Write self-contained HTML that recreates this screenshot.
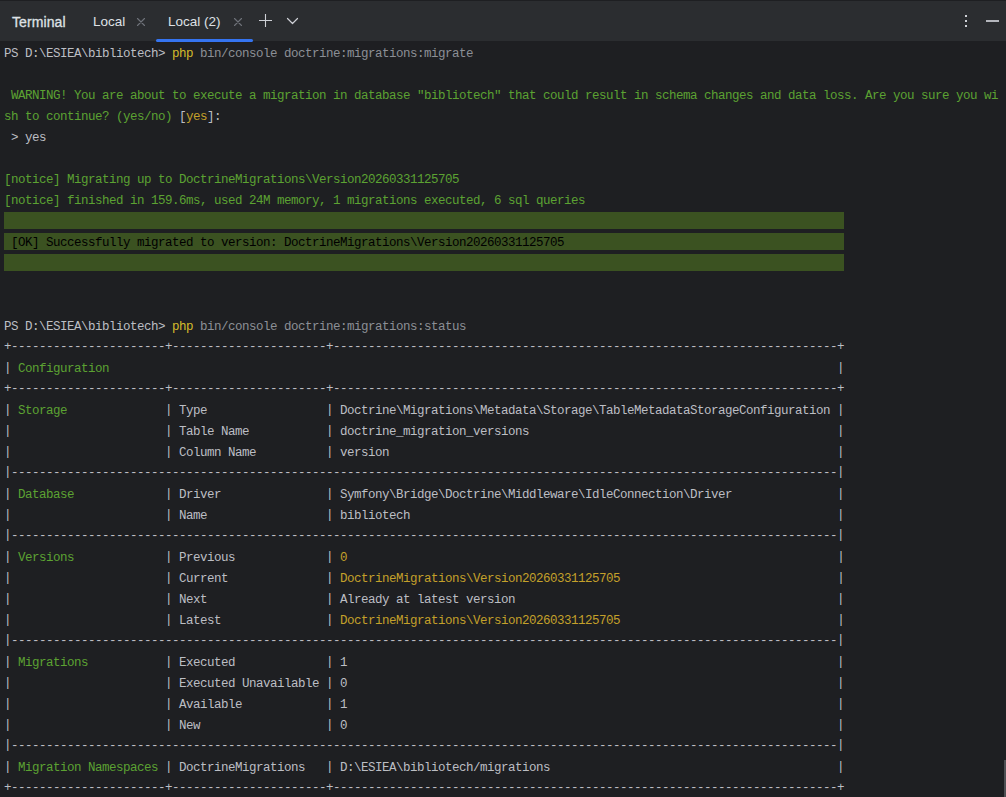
<!DOCTYPE html>
<html><head><meta charset="utf-8"><style>
html,body{margin:0;padding:0;}
body{width:1006px;height:797px;overflow:hidden;background:#1e1f22;position:relative;font-family:"Liberation Sans",sans-serif;}
#hdr{position:absolute;left:0;top:0;width:1006px;height:41px;background:#2b2d30;}
#strip{position:absolute;left:0;top:0;width:1006px;height:1px;background:#1e1f22;}
.tab{position:absolute;top:13px;font-size:13.5px;color:#dfe1e5;line-height:18px;white-space:nowrap;}
.x{position:absolute;}
#term{position:absolute;left:0;top:0;width:1006px;height:797px;}
.ln{position:absolute;left:4px;height:21px;line-height:21px;font-family:"Liberation Mono",monospace;font-size:12.5px;letter-spacing:-0.5012px;color:#bcbec4;white-space:pre;}
.ok{color:#000;}
.p{position:relative;top:-1px;}
.d{position:relative;top:-1px;}
.gb{position:absolute;left:4px;width:840px;height:17px;background:#3b5221;}
#sb{position:absolute;left:1004px;top:760px;width:2px;height:37px;background:#4e5054;}
</style></head><body>
<div id="term">
<div class="gb" style="top:212px"></div>
<div class="gb" style="top:233px"></div>
<div class="gb" style="top:254px"></div>
<div class="ln ok" style="top:233px"> [OK] Successfully migrated to version: DoctrineMigrations\Version20260331125705</div>
<div class="ln" style="top:44px">PS D:\ESIEA\bibliotech&gt; <span style="color:#d4bc2c">php</span><span style="color:#8c8f96"> bin/console doctrine:migrations:migrate</span></div>
<div class="ln" style="top:86px"><span style="color:#5ca232"> WARNING! You are about to execute a migration in database &quot;bibliotech&quot; that could result in schema changes and data loss. Are you sure you wi</span></div>
<div class="ln" style="top:107px"><span style="color:#5ca232">sh to continue? (yes/no) </span><span style="color:#bcbec4">[</span><span style="color:#c4a02a">yes</span><span style="color:#bcbec4">]</span><span style="color:#bcbec4">:</span></div>
<div class="ln" style="top:128px"> &gt; yes</div>
<div class="ln" style="top:170px"><span style="color:#5ca232">[notice] Migrating up to DoctrineMigrations\Version20260331125705</span></div>
<div class="ln" style="top:191px"><span style="color:#5ca232">[notice] finished in 159.6ms, used 24M memory, 1 migrations executed, 6 sql queries</span></div>
<div class="ln" style="top:317px">PS D:\ESIEA\bibliotech&gt; <span style="color:#d4bc2c">php</span><span style="color:#8c8f96"> bin/console doctrine:migrations:status</span></div>
<div class="ln" style="top:338px"><span class="d">+----------------------+----------------------+------------------------------------------------------------------------+</span></div>
<div class="ln" style="top:359px"><span class="p">|</span> <span style="color:#5ca232">Configuration                                                                                                        </span><span class="p">|</span></div>
<div class="ln" style="top:380px"><span class="d">+----------------------+----------------------+------------------------------------------------------------------------+</span></div>
<div class="ln" style="top:401px"><span class="p">|</span> <span style="color:#5ca232">Storage              </span><span class="p">|</span> Type                 <span class="p">|</span> Doctrine\Migrations\Metadata\Storage\TableMetadataStorageConfiguration <span class="p">|</span></div>
<div class="ln" style="top:422px"><span class="p">|</span> <span style="color:#5ca232">                     </span><span class="p">|</span> Table Name           <span class="p">|</span> doctrine_migration_versions                                            <span class="p">|</span></div>
<div class="ln" style="top:443px"><span class="p">|</span> <span style="color:#5ca232">                     </span><span class="p">|</span> Column Name          <span class="p">|</span> version                                                                <span class="p">|</span></div>
<div class="ln" style="top:464px"><span class="d"><span class="p">|</span>----------------------------------------------------------------------------------------------------------------------<span class="p">|</span></span></div>
<div class="ln" style="top:485px"><span class="p">|</span> <span style="color:#5ca232">Database             </span><span class="p">|</span> Driver               <span class="p">|</span> Symfony\Bridge\Doctrine\Middleware\IdleConnection\Driver               <span class="p">|</span></div>
<div class="ln" style="top:506px"><span class="p">|</span> <span style="color:#5ca232">                     </span><span class="p">|</span> Name                 <span class="p">|</span> bibliotech                                                             <span class="p">|</span></div>
<div class="ln" style="top:527px"><span class="d"><span class="p">|</span>----------------------------------------------------------------------------------------------------------------------<span class="p">|</span></span></div>
<div class="ln" style="top:548px"><span class="p">|</span> <span style="color:#5ca232">Versions             </span><span class="p">|</span> Previous             <span class="p">|</span> <span style="color:#c4a02a">0                                                                      </span><span class="p">|</span></div>
<div class="ln" style="top:569px"><span class="p">|</span> <span style="color:#5ca232">                     </span><span class="p">|</span> Current              <span class="p">|</span> <span style="color:#c4a02a">DoctrineMigrations\Version20260331125705                               </span><span class="p">|</span></div>
<div class="ln" style="top:590px"><span class="p">|</span> <span style="color:#5ca232">                     </span><span class="p">|</span> Next                 <span class="p">|</span> Already at latest version                                              <span class="p">|</span></div>
<div class="ln" style="top:611px"><span class="p">|</span> <span style="color:#5ca232">                     </span><span class="p">|</span> Latest               <span class="p">|</span> <span style="color:#c4a02a">DoctrineMigrations\Version20260331125705                               </span><span class="p">|</span></div>
<div class="ln" style="top:632px"><span class="d"><span class="p">|</span>----------------------------------------------------------------------------------------------------------------------<span class="p">|</span></span></div>
<div class="ln" style="top:653px"><span class="p">|</span> <span style="color:#5ca232">Migrations           </span><span class="p">|</span> Executed             <span class="p">|</span> 1                                                                      <span class="p">|</span></div>
<div class="ln" style="top:674px"><span class="p">|</span> <span style="color:#5ca232">                     </span><span class="p">|</span> Executed Unavailable <span class="p">|</span> 0                                                                      <span class="p">|</span></div>
<div class="ln" style="top:695px"><span class="p">|</span> <span style="color:#5ca232">                     </span><span class="p">|</span> Available            <span class="p">|</span> 1                                                                      <span class="p">|</span></div>
<div class="ln" style="top:716px"><span class="p">|</span> <span style="color:#5ca232">                     </span><span class="p">|</span> New                  <span class="p">|</span> 0                                                                      <span class="p">|</span></div>
<div class="ln" style="top:737px"><span class="d"><span class="p">|</span>----------------------------------------------------------------------------------------------------------------------<span class="p">|</span></span></div>
<div class="ln" style="top:758px"><span class="p">|</span> <span style="color:#5ca232">Migration Namespaces </span><span class="p">|</span> DoctrineMigrations   <span class="p">|</span> D:\ESIEA\bibliotech/migrations                                         <span class="p">|</span></div>
<div class="ln" style="top:779px"><span class="d">+----------------------+----------------------+------------------------------------------------------------------------+</span></div>
</div>
<div id="hdr">
<div class="tab" style="left:12px;top:12.6px;font-size:14px;letter-spacing:0.1px;-webkit-text-stroke:0.3px #dfe1e5;">Terminal</div>
<div class="tab" style="left:93px;">Local</div>
<div class="tab" style="left:168px;">Local (2)</div>
<svg class="x" style="left:0;top:0" width="1006" height="42" viewBox="0 0 1006 42">
<path d="M137.5 18.5L144.5 25.5M144.5 18.5L137.5 25.5" stroke="#6f737a" stroke-width="1.1" stroke-linecap="round"/>
<path d="M234.5 18.5L241.5 25.5M241.5 18.5L234.5 25.5" stroke="#6f737a" stroke-width="1.1" stroke-linecap="round"/>
<path d="M265.5 14V27M259 20.5H272" stroke="#ced0d6" stroke-width="1.1"/>
<path d="M287.5 18.5L292.5 23.5L297.5 18.5" stroke="#ced0d6" stroke-width="1.2" fill="none" stroke-linecap="round" stroke-linejoin="round"/>
<rect x="156" y="39" width="97" height="3" rx="1.5" fill="#3574f0"/>
</svg>
<svg class="x" style="left:962px;top:13px" width="8" height="16" viewBox="0 0 8 16"><rect x="3" y="2" width="2" height="2" fill="#ced0d6"/><rect x="3" y="7" width="2" height="2" fill="#ced0d6"/><rect x="3" y="12" width="2" height="2" fill="#ced0d6"/></svg>
<div class="x" style="left:985.5px;top:20px;width:13px;height:2px;background:#b4b6bc"></div>
<div id="strip"></div>
</div>
<div id="sb"></div>
</body></html>
